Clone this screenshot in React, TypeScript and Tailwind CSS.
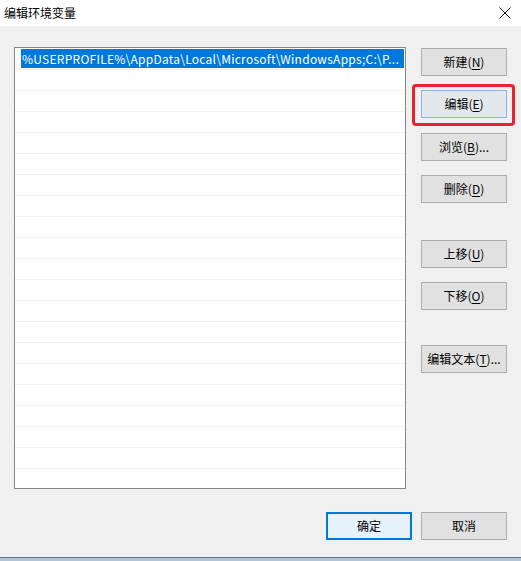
const font = { fontFamily: '"Microsoft YaHei", "Noto Sans CJK SC", "Noto Sans", sans-serif' };

function Btn({
  label,
  mn,
  after = "",
  className = "",
}: {
  label: string;
  mn?: string;
  after?: string;
  className?: string;
}) {
  return (
    <div
      className={
        "w-[86px] h-[28px] flex items-center justify-center text-[12px] text-black bg-[#e1e1e1] border border-[#adadad] " +
        className
      }
    >
      <span>
        {label}
        {mn && (
          <>
            (<span className="underline underline-offset-2">{mn}</span>)
          </>
        )}
        {after}
      </span>
    </div>
  );
}

export default function App() {
  const rows = Array.from({ length: 21 });
  return (
    <div className="w-[521px] h-[561px] flex flex-col bg-[#f0f0f0] overflow-hidden" style={font}>
      {/* title bar */}
      <div className="h-[26px] bg-white flex items-center justify-between pl-[4px] pr-[10px] shrink-0">
        <span className="text-[12px] text-black leading-none">编辑环境变量</span>
        <svg width="12" height="12" viewBox="0 0 12 12">
          <path d="M0.5 0.5 L11.5 11.5 M11.5 0.5 L0.5 11.5" stroke="#111" strokeWidth="1" />
        </svg>
      </div>

      <div className="relative flex-1 flex flex-col pl-[14px] pt-[21px]">
        <div className="flex">
          {/* list box */}
          <div className="w-[392px] h-[442px] bg-white border border-[#828790] overflow-hidden">
            {rows.map((_, i) => (
              <div key={i} className="h-[21px] border-b border-[#f0f0f0]">
                {i === 0 && (
                  <div className="ml-[6px] mr-[1px] mt-[1px] h-[19px] bg-[#0078d7] text-white text-[12px] tracking-[0.25px] leading-[19px] pl-[1px] whitespace-nowrap overflow-hidden">
                    %USERPROFILE%\AppData\Local\Microsoft\WindowsApps;C:\P...
                  </div>
                )}
              </div>
            ))}
          </div>

          {/* side buttons */}
          <div className="ml-[15px] pt-[1px] flex flex-col">
            <Btn label="新建" mn="N" />
            <Btn label="编辑" mn="E" className="mt-[14px] !bg-[#e3e8ec] !border-[#8ab4dd]" />
            <Btn label="浏览" mn="B" after="..." className="mt-[15px]" />
            <Btn label="删除" mn="D" className="mt-[14px]" />
            <Btn label="上移" mn="U" className="mt-[37px]" />
            <Btn label="下移" mn="O" className="mt-[14px]" />
            <Btn label="编辑文本" mn="T" after="..." className="mt-[35px]" />
          </div>
        </div>

        {/* bottom buttons */}
        <div className="flex justify-end gap-[9px] pr-[14px] mt-[23px]">
          <div className="w-[86px] h-[28px] flex items-center justify-center text-[12px] text-black bg-[#e5f1fb] border-2 border-[#0078d7]">
            确定
          </div>
          <Btn label="取消" />
        </div>

        {/* annotation box */}
        <div className="absolute left-[412px] top-[58px] w-[103px] h-[42px] border-[3px] border-[#e3262b] rounded-[4px]" />
      </div>

      <div className="h-[4px] shrink-0 border-t border-[#5d7189] bg-[#b3c4d6]" />
    </div>
  );
}
